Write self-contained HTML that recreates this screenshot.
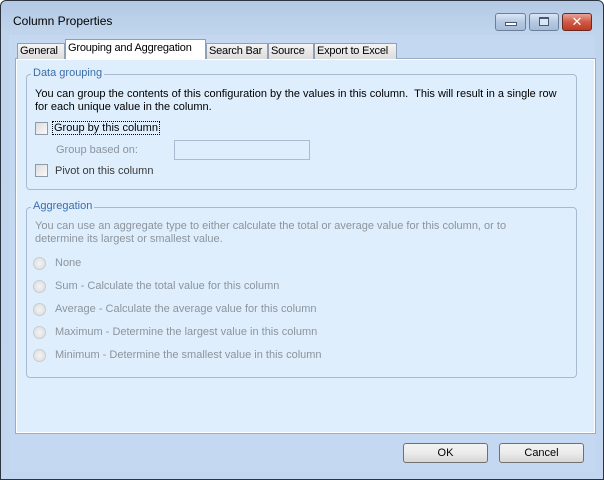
<!DOCTYPE html>
<html><head><style>
*{box-sizing:border-box;margin:0;padding:0}
body{width:604px;height:480px;overflow:hidden;font-family:"Liberation Sans","DejaVu Sans",sans-serif;font-size:11px;color:#000;background:#fff}
.win{position:absolute;left:0;top:0;width:604px;height:480px;border:1px solid #2b3440;border-radius:6px 6px 0 0;background:linear-gradient(#b3c9e4,#c0d4ec 30px,#c2d6ef);}
.title{position:absolute;left:12px;top:13px;font-size:12px;color:#000}
.client{position:absolute;left:8px;top:34px;width:586px;height:437px;background:#c5d8f1;}
.tb{position:absolute;top:12px;height:18px;border:1px solid #6b7f99;border-radius:3px;background:linear-gradient(#dbe6f4,#b6c9e2 50%,#a5bcda)}
.tab{position:absolute;top:41px;height:18px;border:1px solid #8f9fb4;border-bottom:none;background:linear-gradient(#f4f4f4,#dcdcdc);padding:3px 2px 0;white-space:nowrap;letter-spacing:-0.2px;overflow:hidden}
.panel{position:absolute;left:15px;top:58px;width:581px;height:376px;background:#deeefd;border:1px solid #9aabc2;box-shadow:inset 0 0 0 1px #fff}
.gb{position:absolute;border:1px solid #a6bad3;border-radius:4px}
.gl{position:absolute;top:-8px;left:4px;background:#deeefd;padding:0 2px;color:#3c6ea8}
.t{position:absolute;white-space:nowrap}
.g{color:#8d949c}
.cb{position:absolute;width:13px;height:13px;border:1px solid #8e9aaa;background:linear-gradient(135deg,#dcdcdc,#fafafa)}
.rd{position:absolute;width:13px;height:13px;border-radius:50%;border:1px solid #c6ccd3;background:radial-gradient(#f4f4f4,#dadada)}
.btn{position:absolute;top:443px;width:85px;height:20px;border:1px solid #707070;border-radius:3px;background:linear-gradient(#f2f2f2,#ebebeb 50%,#d6d6d6);text-align:center;line-height:18px}
</style></head><body>
<div class="win">
<div class="title">Column Properties</div>
<div class="client"></div>
<div class="tb" style="left:494px;width:31px"><div style="position:absolute;left:9px;top:8px;width:12px;height:4px;border:1px solid #455a78;background:#fff"></div></div>
<div class="tb" style="left:528px;width:30px"><div style="position:absolute;left:9px;top:3px;width:10px;height:9px;border:1px solid #455a78;border-top-width:2px;background:#dbe6f4"></div></div>
<div class="tb" style="left:561px;width:30px;border-color:#6a2a22;background:linear-gradient(#e7a398,#cf5a45 50%,#c03a26);color:#fff;font-weight:bold;text-align:center;line-height:16px;font-size:13px">✕</div>
</div>
<div class="panel"></div>
<div class="tab" style="left:17px;width:48px;top:43px;height:16px;padding-top:1px">General</div>
<div class="tab" style="left:65px;width:141px;top:39px;height:20px;background:#fff;padding-top:2px">Grouping and Aggregation</div>
<div class="tab" style="left:206px;width:62px;top:43px;height:16px;padding-top:1px">Search Bar</div>
<div class="tab" style="left:268px;width:46px;top:43px;height:16px;padding-top:1px">Source</div>
<div class="tab" style="left:314px;width:83px;top:43px;height:16px;padding-top:1px">Export to Excel</div>
<div class="gb" style="left:26px;top:74px;width:551px;height:116px"><div class="gl">Data grouping</div></div>
<div class="t" style="left:35px;top:88px">You can group the contents of this configuration by the values in this column.&nbsp; This will result in a single row</div>
<div class="t" style="left:35px;top:101px">for each unique value in the column.</div>
<div class="cb" style="left:35px;top:122px"></div>
<div class="t" style="left:53px;top:122px;outline:1px dotted #000;padding:0 1px">Group by this column</div>
<div class="t g" style="left:56px;top:144px">Group based on:</div>
<div style="position:absolute;left:174px;top:140px;width:136px;height:20px;border:1px solid #a9bcd3"></div>
<div class="cb" style="left:35px;top:164px"></div>
<div class="t" style="left:55px;top:165px;color:#3a3a3a">Pivot on this column</div>
<div class="gb" style="left:26px;top:207px;width:551px;height:171px"><div class="gl">Aggregation</div></div>
<div class="t g" style="left:35px;top:220px">You can use an aggregate type to either calculate the total or average value for this column, or to</div>
<div class="t g" style="left:35px;top:233px">determine its largest or smallest value.</div>
<div class="rd" style="left:33px;top:257px"></div><div class="t g" style="left:55px;top:257px">None</div>
<div class="rd" style="left:33px;top:280px"></div><div class="t g" style="left:55px;top:280px">Sum - Calculate the total value for this column</div>
<div class="rd" style="left:33px;top:303px"></div><div class="t g" style="left:55px;top:303px">Average - Calculate the average value for this column</div>
<div class="rd" style="left:33px;top:326px"></div><div class="t g" style="left:55px;top:326px">Maximum - Determine the largest value in this column</div>
<div class="rd" style="left:33px;top:349px"></div><div class="t g" style="left:55px;top:349px">Minimum - Determine the smallest value in this column</div>
<div class="btn" style="left:403px">OK</div>
<div class="btn" style="left:499px">Cancel</div>
</body></html>
